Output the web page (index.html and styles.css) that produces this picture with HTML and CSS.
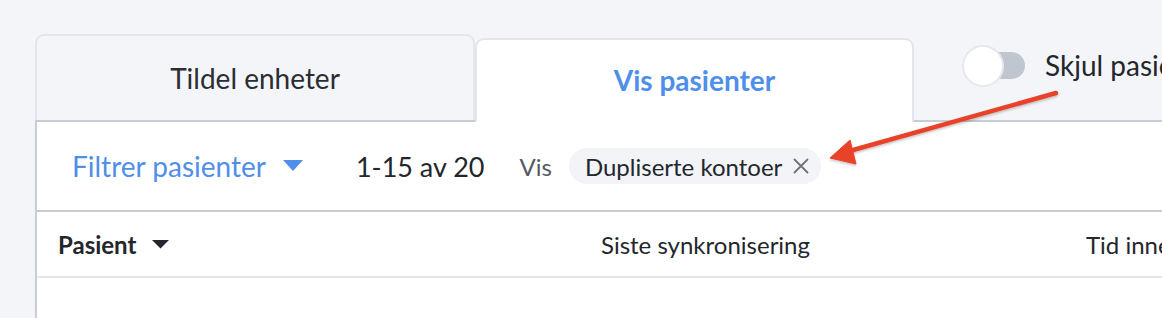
FILE: index.html
```html
<!DOCTYPE html>
<html lang="no">
<head>
<meta charset="utf-8">
<title>Vis pasienter</title>
<link rel="stylesheet" href="styles.css">
</head>
<body>
<div class="page">
  <div class="tabbar">
    <div class="tab tab-inactive">Tildel enheter</div>
    <div class="tab tab-active">Vis pasienter</div>
    <div class="toggle-wrap">
      <span class="toggle"><span class="track"></span><span class="knob"></span></span>
      <span class="toggle-label">Skjul pasienter uten enheter</span>
    </div>
  </div>
  <div class="panel">
    <div class="filter-row">
      <span class="filter-btn">Filtrer pasienter</span>
      <svg class="caret-blue" width="20" height="12" viewBox="0 0 20 12"><polygon points="0,0 20,0 10,11" fill="#4f8fea"/></svg>
      <span class="count">1-15 av 20</span>
      <span class="vis">Vis</span>
      <span class="chip">Dupliserte kontoer
        <svg class="chip-x" width="16" height="16" viewBox="0 0 16 16"><path d="M1.5 1.5 L14.5 14.5 M14.5 1.5 L1.5 14.5" stroke="#6e737b" stroke-width="1.8" stroke-linecap="round"/></svg>
      </span>
    </div>
    <div class="head-row">
      <div class="cell cell-bold">Pasient
        <svg class="caret-dark" width="17" height="9" viewBox="0 0 17 9"><polygon points="0,0 17,0 8.5,8.5" fill="#23262c"/></svg>
      </div>
      <div class="cell">Siste synkronisering</div>
      <div class="cell">Tid inne i programmet</div>
    </div>
  </div>
  <svg class="annot" width="1162" height="318" viewBox="0 0 1162 318">
    <defs>
      <filter id="sh" x="-10%" y="-10%" width="120%" height="120%">
        <feDropShadow dx="0" dy="1.5" stdDeviation="1.2" flood-color="#000" flood-opacity="0.25"/>
      </filter>
    </defs>
    <g filter="url(#sh)" fill="#e8432c" stroke="#e8432c">
      <line x1="1056" y1="93" x2="846" y2="152" stroke-width="4.5" stroke-linecap="round"/>
      <polygon points="830,158 850,140 856,164" stroke-width="1" stroke-linejoin="round"/>
    </g>
  </svg>
</div>
</body>
</html>
```

FILE: styles.css
```css
html, body {
  margin: 0;
  padding: 0;
}
body {
  background: #f4f5f9;
  font-family: Lato, "Noto Sans", sans-serif;
  color: #23262c;
  width: 1162px;
  height: 318px;
  overflow: hidden;
}
.page {
  position: relative;
  padding-top: 34px;
  padding-left: 35px;
  height: 284px;
  overflow: hidden;
}
.tabbar {
  display: flex;
  align-items: flex-end;
  height: 86px;
  position: relative;
  z-index: 1;
}
.tab {
  box-sizing: border-box;
  flex: 0 0 auto;
  display: flex;
  align-items: center;
  justify-content: center;
  font-size: 28px;
  border: 2px solid #e2e5eb;
  border-bottom: none;
  border-radius: 9px 9px 0 0;
}
.tab-inactive {
  width: 440px;
  height: 86px;
  background: #f4f5f9;
  color: #2a2d33;
}
.tab-active {
  width: 439px;
  height: 84px;
  margin-bottom: -2px;
  background: #fff;
  color: #4f8fea;
  font-weight: 700;
  padding-bottom: 2px;
}
.toggle-wrap {
  flex: 0 0 auto;
  align-self: flex-start;
  margin-top: 11px;
  margin-left: 48px;
  display: flex;
  align-items: center;
  height: 42px;
  white-space: nowrap;
}
.toggle {
  position: relative;
  width: 63px;
  height: 42px;
  display: block;
}
.track {
  position: absolute;
  left: 13px;
  top: 5px;
  width: 50px;
  height: 27px;
  margin-top: 2px;
  border-radius: 14px;
  background: #c0c6cf;
}
.knob {
  position: absolute;
  left: 0;
  top: 0;
  box-sizing: border-box;
  width: 42px;
  height: 42px;
  border-radius: 50%;
  background: #fff;
  border: 2px solid #e4e7ec;
}
.toggle-label {
  margin-left: 20px;
  font-size: 28px;
  color: #23262c;
  margin-top: -2px;
}
.panel {
  background: #fff;
  border-top: 2px solid #c8ccd4;
  border-left: 2px solid #c8ccd4;
  width: 1200px;
  height: 200px;
}
.filter-row {
  display: flex;
  align-items: center;
  height: 88px;
  padding-left: 35px;
  border-bottom: 2px solid #c8ccd4;
}
.filter-btn {
  font-size: 28px;
  color: #4f8fea;
}
.caret-blue {
  margin-left: 17px;
  margin-top: -1px;
}
.count {
  margin-left: 53px;
  font-size: 27px;
  color: #23262c;
}
.vis {
  margin-left: 35px;
  font-size: 24px;
  color: #555a62;
}
.chip {
  margin-left: 17px;
  display: flex;
  align-items: center;
  height: 36px;
  padding: 0 12px 0 16px;
  border-radius: 18px;
  background: #f2f4f8;
  font-size: 24px;
  color: #23262c;
}
.chip-x {
  margin-left: 11px;
}
.head-row {
  display: grid;
  grid-template-columns: 543px 485px 1fr;
  height: 64px;
  border-bottom: 2px solid #e3e6ec;
}
.cell {
  display: flex;
  align-items: center;
  padding-left: 21px;
  font-size: 24px;
  color: #23262c;
  white-space: nowrap;
}
.cell-bold {
  font-weight: 700;
}
.caret-dark {
  margin-left: 16px;
}
.annot {
  position: absolute;
  left: 0;
  top: 0;
  z-index: 5;
  pointer-events: none;
}
```
